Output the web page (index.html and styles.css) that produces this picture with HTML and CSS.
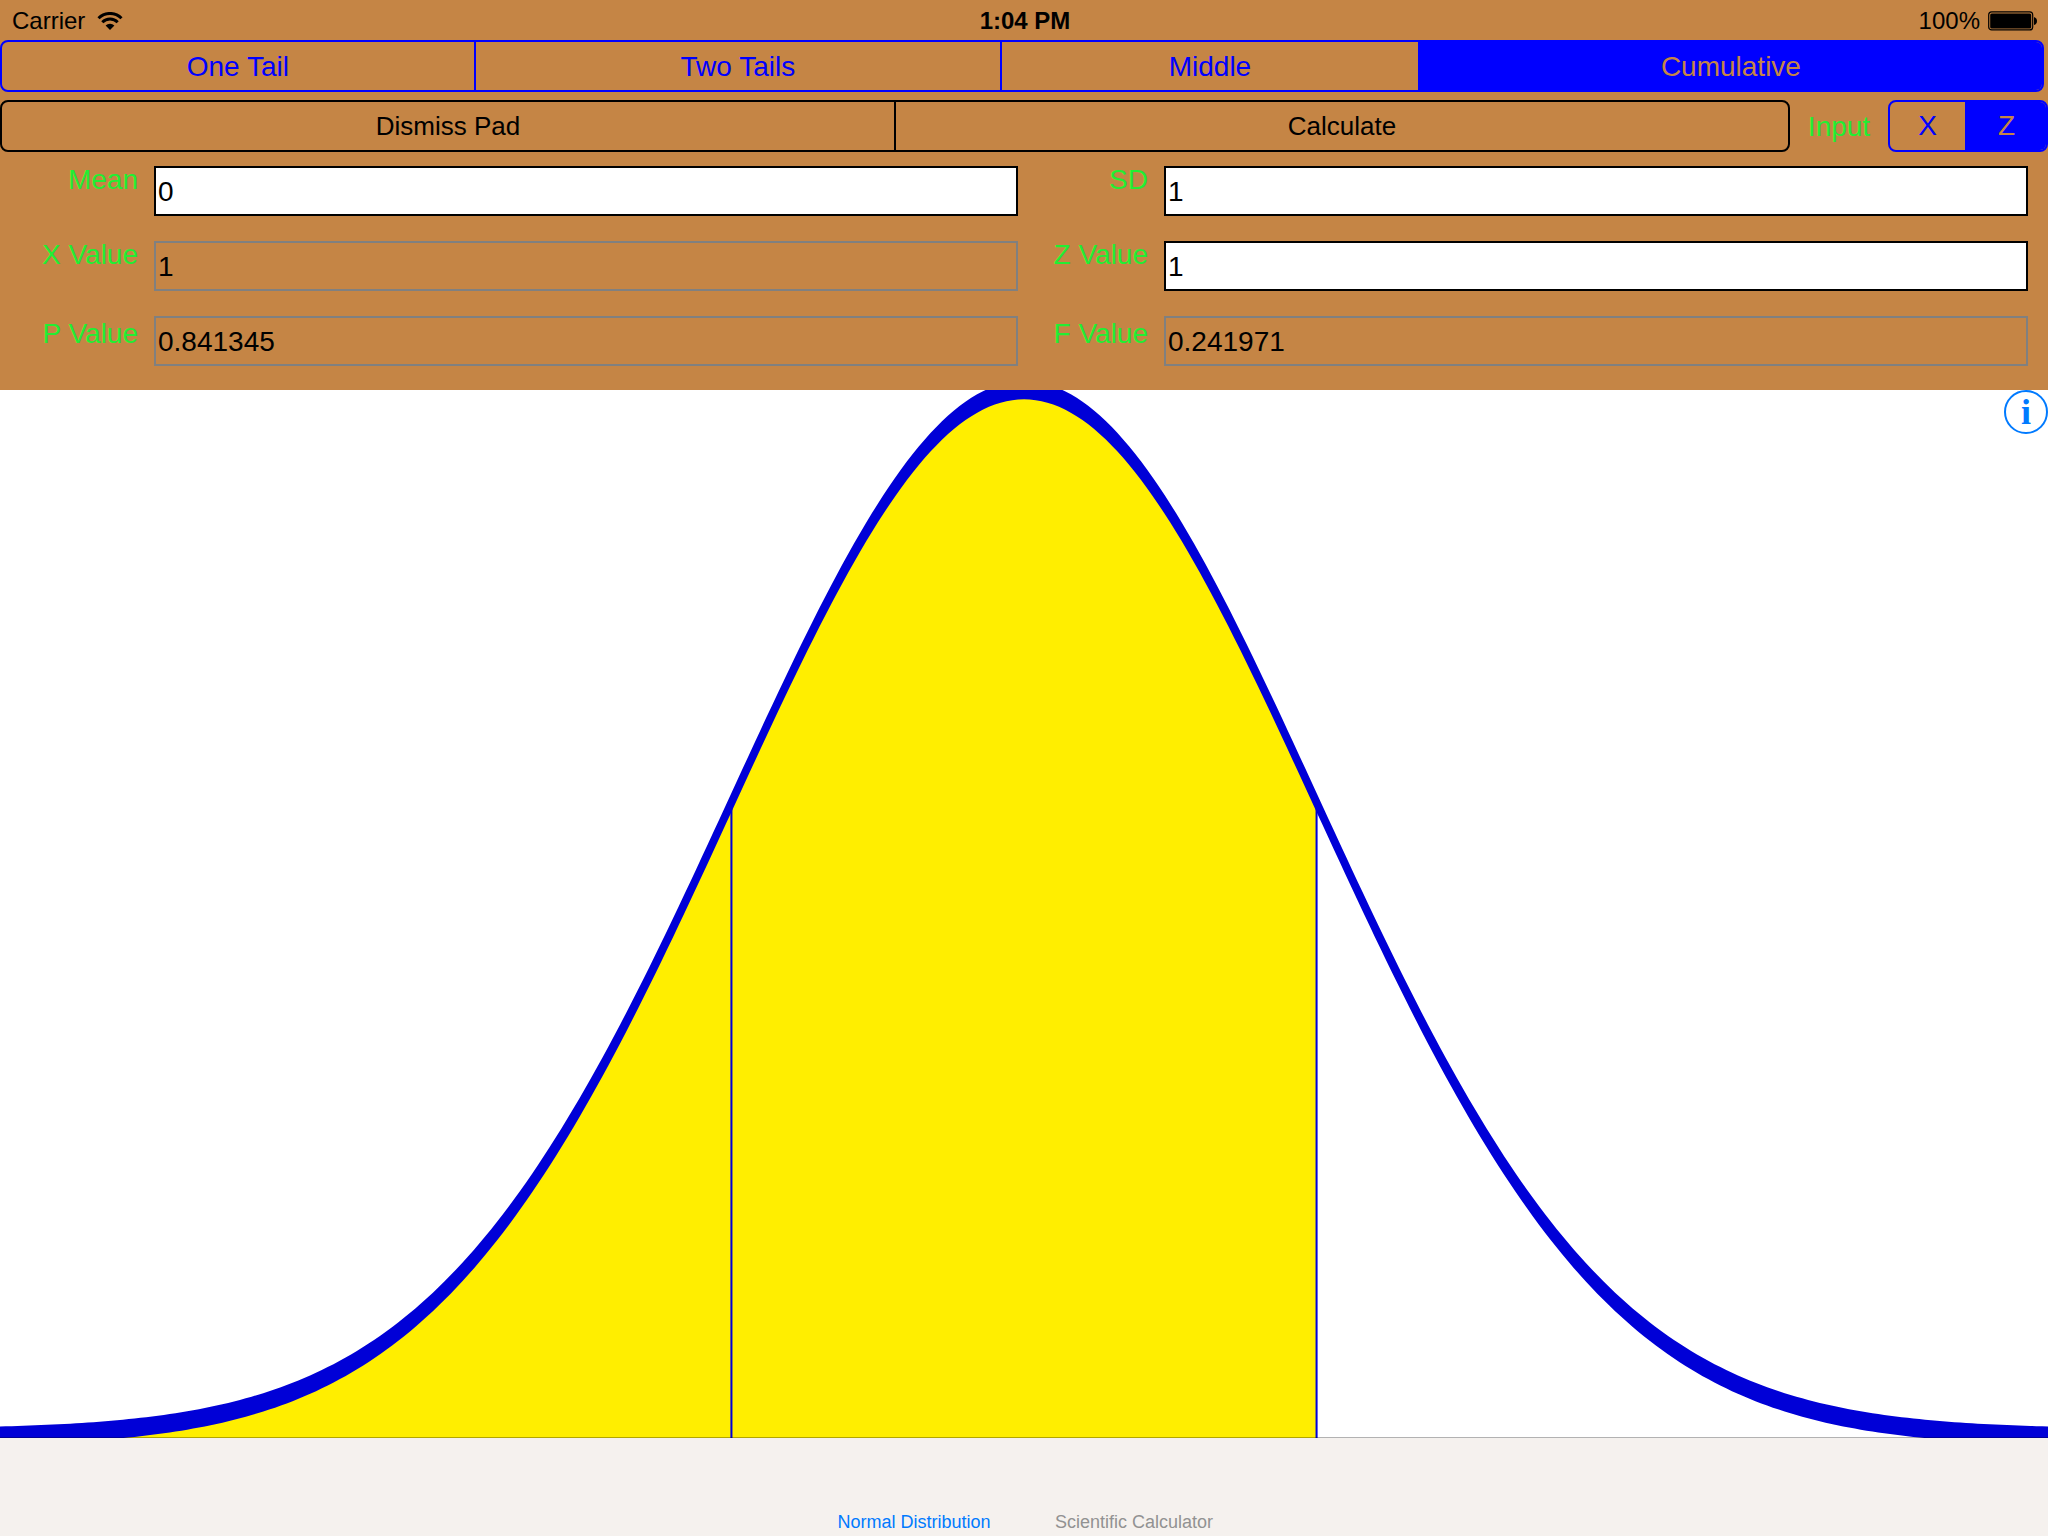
FILE: index.html
```html
<!DOCTYPE html>
<html lang="en">
<head>
<meta charset="utf-8">
<title>Normal Distribution</title>
<link rel="stylesheet" href="styles.css">
</head>
<body>

<div class="panel">
    <div class="status">
        <div class="status_left">
            <span>Carrier</span>
            <svg class="wifi" viewBox="0 0 26 18" width="26" height="18">
                <path d="M1.5 6.2 A16.3 16.3 0 0 1 24.5 6.2" fill="none" stroke="#000" stroke-width="3"/>
                <path d="M5.3 10.3 A10.9 10.9 0 0 1 20.7 10.3" fill="none" stroke="#000" stroke-width="3"/>
                <path d="M8.6 13.6 A6.2 6.2 0 0 1 17.4 13.6 L13 18 Z"/>
            </svg>
        </div>
        <div class="status_time">1:04 PM</div>
        <div class="status_right">
            <span>100%</span>
            <svg class="battery" viewBox="0 0 50 20" width="50" height="20">
                <rect x="0.7" y="0.9" width="44" height="18" rx="3" fill="none" stroke="#000" stroke-width="1.2"/>
                <rect x="2.2" y="2.4" width="41" height="15" rx="1.5"/>
                <path d="M46 6 Q49 7 49 10 Q49 13 46 14 Z"/>
            </svg>
        </div>
    </div>

    <div class="segments blue tails" id="tails">
        <button type="button" class="one">One Tail</button>
        <button type="button" class="two">Two Tails</button>
        <button type="button" class="middle">Middle</button>
        <button type="button" class="cumulative selected">Cumulative</button>
    </div>

    <div class="actions">
        <div class="segments black">
            <button type="button">Dismiss Pad</button>
            <button type="button">Calculate</button>
        </div>
        <span class="caption" id="input_label">Input</span>
        <div class="segments blue xz" id="xz" role="group" aria-labelledby="input_label">
            <button type="button">X</button>
            <button type="button" class="selected">Z</button>
        </div>
    </div>

    <form class="fields">
        <label for="mean">Mean</label>
        <input type="text" id="mean" value="0">
        <label for="sd">SD</label>
        <input type="text" id="sd" value="1">
        <label for="x">X Value</label>
        <input type="text" id="x" value="1" readonly>
        <label for="z">Z Value</label>
        <input type="text" id="z" value="1">
        <label for="p" class="result">P Value</label>
        <input type="text" id="p" value="0.841345" readonly>
        <label for="f" class="result">F Value</label>
        <input type="text" id="f" value="0.241971" readonly>
    </form>
</div>

<div class="chart">
    <!-- x: sd * 1000, y: density * 1000 -->
    <svg class="plot" viewBox="-3500 -399 7000 399" preserveAspectRatio="none">
        <path class="area" id="area"/>
        <path class="limit" id="limit"/>
        <path class="curve" id="curve"/>
    </svg>
    <button type="button" class="info" aria-label="Info">i</button>
</div>

<nav class="tabbar">
    <a href="#" class="active">Normal Distribution</a>
    <a href="#">Scientific Calculator</a>
</nav>

<script src="chart.js"></script>
</body>
</html>
```
FILE: styles.css
```css
*{ margin:0; padding:0; box-sizing:border-box;}
body{ min-height:100vh; display:flex; flex-direction:column; background:#fff; font-family:"Liberation Sans", Arial, sans-serif; font-size:28px; line-height:28px;}
button, input{ font:inherit; color:inherit; border-radius:0;}
a{ text-decoration:none;}

.panel{ background:#c58545; padding-bottom:24px;}

.status{ display:grid; grid-template-columns:1fr auto 1fr; align-items:center; height:40px; padding:2px 10px 0 12px; font-size:24px;}
.status_left, .status_right{ display:flex; align-items:center;}
.status_left{ gap:12px;}
.status_right{ justify-content:flex-end; gap:8px;}
.status_time{ font-weight:bold;}
.wifi, .battery{ display:block;}

/* segmented buttons */
.segments{ display:flex; height:52px; border:2px solid; border-radius:8px; overflow:hidden;}
.segments button{ flex:1 1 0; border:none; background:none; cursor:pointer;}
.segments button + button{ border-left:2px solid;}
.blue{ color:#00f; border-color:#00f;}
.black{ color:#000; border-color:#000; font-size:26px;}
.blue button + button{ border-color:#00f;}
.blue .selected{ background:#00f; color:#c58545;}
.tails{ margin-right:4px;}
.tails button{ padding-top:2px;}
.tails .one{ flex-grow:473;}
.tails .two{ flex-grow:526;}
.tails .middle{ flex-grow:417;}
.tails .cumulative{ flex-grow:624;}

.actions{ display:flex; align-items:center; gap:16px; margin-top:8px;}
.actions .black{ flex:1;}
.actions .xz{ width:160px;}
.xz .selected{ flex-grow:1.05;}
.caption{ width:66px; padding-top:2px; text-align:center; color:#22ee33;}

.fields{ display:grid; grid-template-columns:138px 1fr 114px 1fr; gap:25px 16px; padding:14px 20px 0 0;}
.fields label{ text-align:right; color:#22ee33;}
.fields .result{ padding-top:4px;}
.fields input{ width:100%; min-width:0; height:50px; padding:2px 2px 0; border:2px solid #000; background:#fff; color:#000;}
.fields input[readonly]{ background:none; border-color:#808080;}

.chart{ position:relative; flex:1; min-height:300px; overflow:hidden;}
.plot{ position:absolute; width:100%; height:100%;}
.area{ fill:#ffee00;}
.curve{ fill:none; stroke:#0000d7; stroke-width:7;}
.limit{ fill:none; stroke:#0000d7; stroke-width:7;}
.info{ position:absolute; top:0; right:0; width:44px; height:44px; border:2px solid #007aff; border-radius:50%; background:none; color:#007aff; font:bold 36px/40px "Liberation Serif", serif; cursor:pointer;}

.tabbar{ position:relative; display:flex; justify-content:center; align-items:flex-end; gap:48px; height:98px; padding-bottom:4px; background:#f5f1ee; box-shadow:0 -1px 0 rgba(0,0,0,.3); font-size:18px; line-height:20px;}
.tabbar a{ width:172px; text-align:center; color:#929292;}
.tabbar .active{ color:#007aff;}
```
FILE: chart.js
```js
function density(x){
    return Math.exp(-x * x / 2) / Math.sqrt(2 * Math.PI);
}

function points(from, to){
    var list = [];
    for(var i = Math.round(from * 50); i <= Math.round(to * 50); i++){
        list.push(i * 20 + ',' + (-density(i / 50) * 1000).toFixed(3));
    }
    return list.join(' L');
}

function draw(z){
    var edge = Math.round(z * 1000);
    var top = -density(z) * 1000;
    document.getElementById('curve').setAttribute('d', 'M' + points(-3.6, 3.6));
    document.getElementById('area').setAttribute('d', 'M-3600,0 L' + points(-3.6, z) + ' L' + edge + ',0 Z');
    document.getElementById('limit').setAttribute('d', 'M' + -edge + ',0 V' + top + ' M' + edge + ',0 V' + top);
}

function segmented(id){
    var buttons = document.getElementById(id).getElementsByTagName('button');
    for(var i = 0; i < buttons.length; i++){
        buttons[i].onclick = function(){
            for(var j = 0; j < buttons.length; j++){
                buttons[j].classList.remove('selected');
            }
            this.classList.add('selected');
        };
    }
}

draw(parseFloat(document.getElementById('z').value));
segmented('tails');
segmented('xz');
```
